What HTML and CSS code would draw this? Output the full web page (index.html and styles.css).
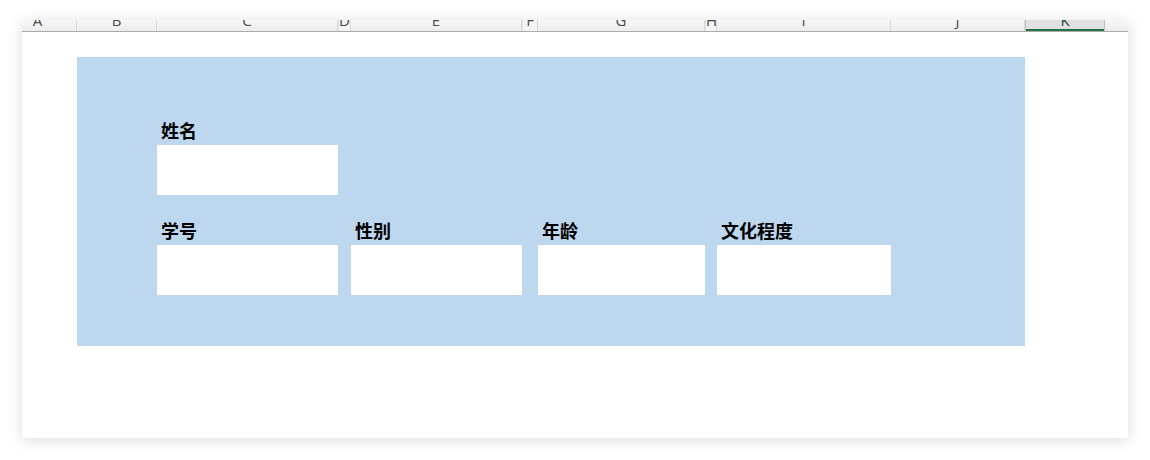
FILE: index.html
```html
<!DOCTYPE html>
<html lang="zh-CN">
<head>
<meta charset="utf-8">
<title>表单</title>
<link rel="stylesheet" href="styles.css">
</head>
<body>
<div class="sheet">
  <div class="colhead">
    <div class="cell first"><span>A</span></div>
    <div class="cell"><span>B</span></div>
    <div class="cell"><span>C</span></div>
    <div class="cell narrow"><span>D</span></div>
    <div class="cell"><span>E</span></div>
    <div class="cell narrow"><span>F</span></div>
    <div class="cell"><span>G</span></div>
    <div class="cell narrow"><span>H</span></div>
    <div class="cell"><span>I</span></div>
    <div class="cell"><span>J</span></div>
    <div class="cell active"><span>K</span></div>
    <div class="cell rest"></div>
  </div>
  <div class="canvas">
    <div class="form">
      <div class="field f-name">
        <div class="label">姓名</div>
        <div class="box"></div>
      </div>
      <div class="field f-id">
        <div class="label">学号</div>
        <div class="box"></div>
      </div>
      <div class="field f-sex">
        <div class="label">性别</div>
        <div class="box"></div>
      </div>
      <div class="field f-age">
        <div class="label">年龄</div>
        <div class="box"></div>
      </div>
      <div class="field f-edu">
        <div class="label">文化程度</div>
        <div class="box"></div>
      </div>
    </div>
  </div>
</div>
</body>
</html>
```
FILE: styles.css
```css
html, body {
  margin: 0;
  padding: 0;
  background: #ffffff;
}

body {
  width: 1150px;
  height: 460px;
  overflow: hidden;
  font-family: "Noto Sans CJK SC", "Noto Sans", sans-serif;
}

.sheet {
  margin: 20px 0 0 22px;
  width: 1106px;
  height: 418px;
  background: #ffffff;
  box-shadow: 0 2px 14px rgba(0, 0, 0, 0.14);
  overflow: hidden;
}

.colhead {
  display: grid;
  grid-template-columns: 55px 80px 181px 13px 171px 16px 167px 12px 174px 134px 80px 1fr;
  height: 11px;
  border-bottom: 1px solid #ababab;
  background: linear-gradient(#f7f7f7, #ececec);
  overflow: hidden;
}

.colhead .cell {
  border-right: 1px solid #d9d9d9;
  text-align: center;
  overflow: hidden;
  font-family: "Open Sans", "Liberation Sans", sans-serif;
  font-size: 15px;
  color: #4a4a4a;
}

.colhead .cell span {
  display: block;
  line-height: 11px;
  margin-top: -5px;
}

.colhead .first {
  padding-right: 23px;
}

.colhead .narrow {
  border-left: 1px solid #e4e4e4;
  background: #f4f4f4;
}

.colhead .active {
  background: #e1e1e1;
  border-left: 1px solid #bdbdbd;
  border-right: 1px solid #bdbdbd;
  box-shadow: inset 0 -2px 0 #217346;
  color: #1e4d33;
}

.colhead .rest {
  border-right: none;
}

.canvas {
  padding: 25px 0 0 55px;
}

.form {
  width: 948px;
  height: 289px;
  box-sizing: border-box;
  background: #bdd7ee;
  padding: 68px 0 0 80px;
  display: grid;
  grid-template-columns: 181px 13px 171px 16px 167px 12px 174px;
  grid-template-rows: 70px 70px;
  row-gap: 30px;
  align-content: start;
}

.field {
  display: flex;
  flex-direction: column;
}

.f-name { grid-column: 1; grid-row: 1; }
.f-id   { grid-column: 1; grid-row: 2; }
.f-sex  { grid-column: 3; grid-row: 2; }
.f-age  { grid-column: 5; grid-row: 2; }
.f-edu  { grid-column: 7; grid-row: 2; }

.label {
  height: 20px;
  line-height: 10px;
  padding-left: 4px;
  font-size: 18px;
  font-weight: bold;
  color: #000000;
  white-space: nowrap;
}

.box {
  height: 50px;
  background: #ffffff;
}
```
